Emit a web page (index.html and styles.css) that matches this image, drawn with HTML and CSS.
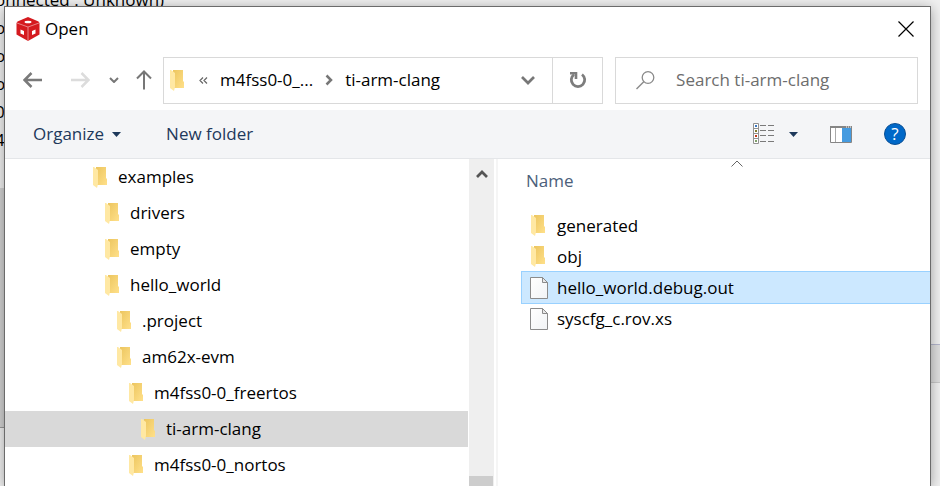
FILE: index.html
```html
<!DOCTYPE html>
<html lang="en">
<head>
<meta charset="utf-8">
<title>Open</title>
<link rel="stylesheet" href="styles.css">
</head>
<body>
<svg class="defs" aria-hidden="true">
  <defs>
    <linearGradient id="fold-back" x1="0" y1="0" x2="1" y2="1"><stop offset="0" stop-color="#ecc55e"/><stop offset="1" stop-color="#ffe08a"/></linearGradient>
    <linearGradient id="paper" x1="0" y1="0" x2="1" y2="1"><stop offset="0" stop-color="#ffffff"/><stop offset="1" stop-color="#f1f3f5"/></linearGradient>
    <symbol id="folder" viewBox="0 0 15 21">
      <path d="M3 0H13V11L14 12V18H3Z" fill="url(#fold-back)"/>
      <path d="M0 0H1L5 3V17L4 21L0 18Z" fill="#ffe8a3"/>
    </symbol>
    <symbol id="file" viewBox="0 0 18 22">
      <path d="M.5 .5H12.5L17.5 5.5V21.5H.5Z" fill="url(#paper)" stroke="#8b8b8b"/>
      <path d="M12.500 .5V5.500H17.500Z" fill="#e8e8e8" stroke="#8b8b8b"/>
    </symbol>
  </defs>
</svg>

<div class="backdrop">
  <div class="console">
    <p>onnected : Unknown)</p>
    <p>or</p>
    <p>or</p>
    <p>or</p>
    <p>0</p>
    <p>4</p>
  </div>
  <div class="strip-left"></div>
  <div class="strip-right"></div>
</div>

<main class="dialog">
  <header class="titlebar">
    <svg class="app-icon" width="24" height="24" viewBox="0 0 24 24" aria-hidden="true">
      <path d="M12 0L22.500 4.500L23.500 6V17.500L12 24L.5 17.500V6L1.500 4.500Z" fill="#d51a1f"/>
      <path d="M1 6L12 10L23 6M12 10V24" fill="none" stroke="#e98386" stroke-width="1"/>
      <ellipse cx="12" cy="5" rx="3.500" ry="1.300" fill="#fff"/>
      <path d="M4.500 12.500L8 14V18L4.500 16.500Z" fill="#fff"/>
      <path d="M19.500 12.500L16 14V18L19.500 16.500Z" fill="#fff"/>
    </svg>
    <h1>Open</h1>
    <button class="close" aria-label="Close">
      <svg width="16" height="16" viewBox="0 0 16 16"><path d="M.5 .5L15.500 15.500M15.500 .5L.5 15.500" stroke="#000" stroke-width="1.200"/></svg>
    </button>
  </header>

  <nav class="navbar">
    <div class="history">
      <button aria-label="Back"><svg width="20" height="16" viewBox="0 0 20 16"><path d="M1.500 8H19M8.500 1L1.500 8L8.500 15" fill="none" stroke="#7a7a7a" stroke-width="2.500"/></svg></button>
      <button aria-label="Forward" class="forward"><svg width="20" height="16" viewBox="0 0 20 16"><path d="M1 8H18.500M11.500 1L18.500 8L11.500 15" fill="none" stroke="#dcdcdc" stroke-width="2.500"/></svg></button>
      <button aria-label="Recent locations" class="recent"><svg width="10" height="6" viewBox="0 0 10 6"><path d="M1 1L5 5L9 1" fill="none" stroke="#777" stroke-width="2"/></svg></button>
      <button aria-label="Up" class="up"><svg width="16" height="20" viewBox="0 0 16 20"><path d="M8 1.500V19.500M1 8.500L8 1.500L15 8.500" fill="none" stroke="#777" stroke-width="2"/></svg></button>
    </div>
    <div class="address">
      <div class="crumbs">
        <svg class="folder" width="15" height="21"><use href="#folder"/></svg>
        <button class="more" aria-label="More locations"><svg width="9" height="7" viewBox="0 0 9 7"><path d="M4 .5L1 3.500L4 6.500M8 .5L5 3.500L8 6.500" fill="none" stroke="#666" stroke-width="1.200"/></svg></button>
        <a href="#">m4fss0-0_...</a>
        <svg class="sep" width="8" height="12" viewBox="0 0 8 12"><path d="M1.500 1.500L6 6L1.500 10.500" fill="none" stroke="#777" stroke-width="2.500"/></svg>
        <a href="#">ti-arm-clang</a>
        <button class="drop" aria-label="Previous locations"><svg width="14" height="9" viewBox="0 0 14 9"><path d="M1 1L7 7L13 1" fill="none" stroke="#777" stroke-width="2.700"/></svg></button>
      </div>
      <button class="refresh" aria-label="Refresh">
        <svg width="18" height="18" viewBox="0 0 18 18"><path d="M13 3.500A6.700 6.700 0 1 1 5 3.500" fill="none" stroke="#7d7d7d" stroke-width="2.800"/><path d="M1 2.200H7V8" fill="none" stroke="#7d7d7d" stroke-width="2.600"/></svg>
      </button>
    </div>
    <label class="search">
      <svg width="19" height="19" viewBox="0 0 19 19" aria-hidden="true"><circle cx="12" cy="6.500" r="5.800" fill="none" stroke="#8a8a8a" stroke-width="1.300"/><path d="M8 10.500L.5 18" stroke="#8a8a8a" stroke-width="1.400"/></svg>
      <input type="search" placeholder="Search ti-arm-clang" aria-label="Search ti-arm-clang">
    </label>
  </nav>

  <div class="toolbar">
    <button class="organize">Organize <svg width="9" height="5" viewBox="0 0 9 5"><path d="M0 0H9L4.500 5Z" fill="#1e395b"/></svg></button>
    <button>New folder</button>
    <div class="view-tools">
      <button class="view" aria-label="Change view">
        <svg width="22" height="22" viewBox="0 0 22 22">
          <path d="M.5 .5H5.500V20.500H.5ZM.5 5.500H5.500M.5 10.500H5.500M.5 15.500H5.500" fill="#fff" stroke="#929292"/>
          <path d="M7 2.500H13M15 2.500H21M7 7.500H13M15 7.500H21M7 12.500H13M15 12.500H21M7 18.500H13M15 18.500H21" stroke="#7a7a7a"/>
          <path d="M2 2H4V4H2Z" fill="#3a78c2"/><path d="M2 7H4V9H2Z" fill="#827b2c"/><path d="M2 12H4V14H2Z" fill="#c23a1c"/><path d="M2 17H4V19H2Z" fill="#7fa06a"/>
        </svg>
      </button>
      <button class="view-more" aria-label="More view options"><svg width="9" height="5" viewBox="0 0 9 5"><path d="M0 0H9L4.500 5Z" fill="#1e395b"/></svg></button>
      <button class="pane" aria-label="Show the preview pane">
        <svg width="22" height="17" viewBox="0 0 22 17"><path d="M.5 .5H21.500V16.500H.5Z" fill="#fff" stroke="#858585"/><path d="M0 0H22V2H0Z" fill="#858585"/><path d="M5.500 2V16" stroke="#aaa"/><path d="M12 2H21V16H12Z" fill="#459be0"/><path d="M16 1H17M18 1H19M20 1H21" stroke="#fff"/></svg>
      </button>
      <button class="help" aria-label="Get help">?</button>
    </div>
  </div>

  <div class="content">
    <ul class="tree">
      <li><svg class="folder" width="15" height="21"><use href="#folder"/></svg>examples</li>
      <li class="l1"><svg class="folder" width="15" height="21"><use href="#folder"/></svg>drivers</li>
      <li class="l1"><svg class="folder" width="15" height="21"><use href="#folder"/></svg>empty</li>
      <li class="l1"><svg class="folder" width="15" height="21"><use href="#folder"/></svg>hello_world</li>
      <li class="l2"><svg class="folder" width="15" height="21"><use href="#folder"/></svg>.project</li>
      <li class="l2"><svg class="folder" width="15" height="21"><use href="#folder"/></svg>am62x-evm</li>
      <li class="l3"><svg class="folder" width="15" height="21"><use href="#folder"/></svg>m4fss0-0_freertos</li>
      <li class="l4 current"><svg class="folder" width="15" height="21"><use href="#folder"/></svg>ti-arm-clang</li>
      <li class="l3"><svg class="folder" width="15" height="21"><use href="#folder"/></svg>m4fss0-0_nortos</li>
    </ul>
    <div class="scrollbar">
      <button aria-label="Scroll up"><svg width="12" height="10" viewBox="0 0 12 10"><path d="M1 8L6 3L11 8" fill="none" stroke="#555" stroke-width="2.700"/></svg></button>
      <div class="thumb"></div>
    </div>
    <div class="splitter"></div>
    <table class="files">
      <thead>
        <tr><th scope="col">Name<svg class="sort" width="12" height="7" viewBox="0 0 12 7" aria-hidden="true"><path d="M.5 6.500L6 1L11.500 6.500" fill="none" stroke="#666"/></svg></th></tr>
      </thead>
      <tbody>
        <tr><td><svg class="icon" width="18" height="21"><use href="#folder" width="15" height="21" x="1"/></svg>generated</td></tr>
        <tr><td><svg class="icon" width="18" height="21"><use href="#folder" width="15" height="21" x="1"/></svg>obj</td></tr>
        <tr class="selected"><td><svg class="icon" width="18" height="22"><use href="#file"/></svg>hello_world.debug.out</td></tr>
        <tr><td><svg class="icon" width="18" height="22"><use href="#file"/></svg>syscfg_c.rov.xs</td></tr>
      </tbody>
    </table>
  </div>
</main>
</body>
</html>
```

FILE: styles.css
```css
* { box-sizing: border-box; }

body {
  margin: 0;
  height: 100vh;
  display: flex;
  overflow: hidden;
  background: #f0f0f0;
  font: 17px/24px "Open Sans", "Noto Sans", sans-serif;
  color: #000;
}

button {
  display: flex;
  align-items: center;
  padding: 0;
  border: 0;
  background: none;
  font: inherit;
  color: inherit;
}

a { color: inherit; text-decoration: none; }
svg { display: block; flex: none; }
.defs { position: absolute; width: 0; height: 0; }

/* Window behind the dialog */
.backdrop { position: absolute; inset: 0; }
.console { position: absolute; left: -5px; top: -14px; line-height: 28px; }
.console p { margin: 0; }
.strip-left {
  position: absolute;
  left: 0;
  top: 188px;
  width: 5px;
  height: 240px;
  background: #d2d2d2;
  border-bottom: 1px solid #999;
}
.strip-right {
  position: absolute;
  right: 0;
  top: 344px;
  width: 10px;
  height: 39px;
  background: #dedede;
  border-top: 1px solid #b4b6cc;
  border-bottom: 1px solid #c8c8c8;
}

/* Dialog */
.dialog {
  position: relative;
  flex: 1;
  display: flex;
  flex-direction: column;
  min-width: 0;
  margin: 6px 9px 0 4px;
  border: 1px solid #6b6b6b;
  border-bottom: 0;
  background: #fff;
  box-shadow: 0 2px 12px rgba(0, 0, 0, .35);
}

.titlebar {
  display: flex;
  align-items: center;
  height: 43px;
  padding: 0 16px 0 11px;
}
h1 { flex: 1; margin: 0 0 0 5px; font-size: 17px; font-weight: 400; }

.navbar {
  display: grid;
  grid-template-columns: 140px minmax(0, 439fr) minmax(0, 304fr);
  align-items: center;
  height: 60px;
  padding: 0 12px 0 18px;
}
.history { display: flex; align-items: center; }
.forward { margin-left: 27px; }
.recent { margin-left: 19px; }
.up { margin-left: 17px; }

.address, .search {
  display: flex;
  height: 47px;
  border: 1px solid #d9d9d9;
}
.address { margin-right: 6px; }
.crumbs { flex: 1; display: flex; align-items: center; min-width: 0; padding: 0 17px 0 6px; }
.more { margin: 0 12px 0 14px; }
.sep { margin: 0 12px; }
.drop { margin-left: auto; }
.refresh { width: 50px; justify-content: center; border-left: 1px solid #d9d9d9; }

.search { align-items: center; margin-left: 6px; padding: 0 20px; }
.search input {
  flex: 1;
  min-width: 0;
  margin-left: 21px;
  padding: 0;
  border: 0;
  outline: 0;
  background: none;
  font: inherit;
}
.search input::placeholder { color: #6d6d6d; opacity: 1; }

.toolbar {
  display: flex;
  align-items: center;
  height: 49px;
  padding: 0 24px 0 28px;
  background: #f4f5f7;
  border-bottom: 1px solid #e4e6e9;
  color: #1e395b;
}
.organize { gap: 8px; margin-right: 45px; }
.view-tools { display: flex; align-items: center; margin-left: auto; }
.view { margin-right: 14px; }
.view-more { margin-right: 32px; }
.pane { margin-right: 32px; }
.help {
  width: 22px;
  height: 22px;
  justify-content: center;
  border: 1px solid #0a4f94;
  border-radius: 50%;
  background: #0068c8;
  color: #fff;
}

.content { flex: 1; display: flex; min-height: 0; }

.tree { flex: 463; min-width: 0; margin: 0 1px 0 0; padding: 0; list-style: none; }
.tree li { display: flex; align-items: center; gap: 10px; height: 36px; padding-left: 88px; }
.tree .l1 { padding-left: 100px; }
.tree .l2 { padding-left: 112px; }
.tree .l3 { padding-left: 124px; }
.tree .l4 { padding-left: 136px; }
.tree .current { background: #d9d9d9; }

.scrollbar {
  display: flex;
  flex-direction: column;
  justify-content: space-between;
  width: 25px;
  background: #efefef;
}
.scrollbar button { height: 30px; justify-content: center; }
.thumb { height: 10px; margin-right: 1px; background: #cdcdcd; }
.splitter { width: 2px; margin: 0 23px 0 2px; background: #f5f5f5; }

.files, .files thead, .files tbody, .files tr { display: block; }
.files { flex: 409; min-width: 0; }
.files th {
  position: relative;
  display: flex;
  align-items: center;
  height: 44px;
  margin-bottom: 7px;
  padding-left: 5px;
  font-weight: 400;
  color: #4c607a;
}
.sort { position: absolute; left: 210px; top: 1px; }
.files td { display: flex; align-items: center; gap: 9px; height: 31px; padding: 0 0 0 9px; }
.files .selected td {
  height: 33px;
  margin: -1px 0;
  padding-left: 8px;
  background: #cce8ff;
  border: 1px solid #99d1ff;
  border-right: 0;
}
```
